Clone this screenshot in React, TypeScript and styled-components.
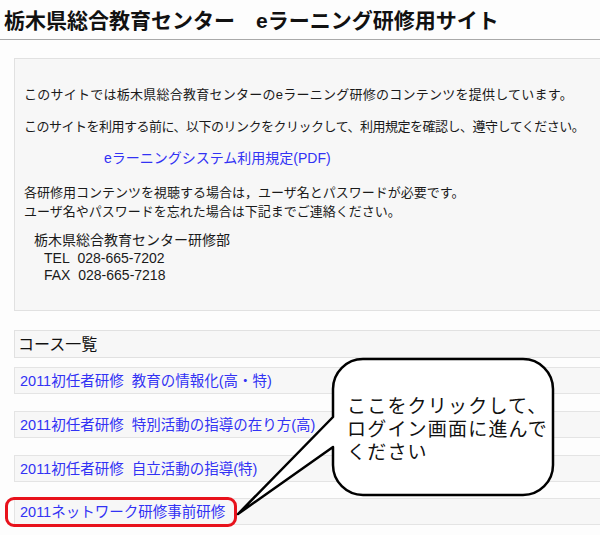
import React from 'react'
import styled, { createGlobalStyle } from 'styled-components'

const GlobalStyle = createGlobalStyle`
  html, body {
    margin: 0;
    padding: 0;
    background: #fdfdfd;
    overflow: hidden;
  }
  body {
    font-family: "Liberation Sans", "Noto Sans CJK JP", sans-serif;
    color: #1a1a1a;
  }
`

const courses = [
  '2011初任者研修\u00a0\u00a0教育の情報化(高・特)',
  '2011初任者研修\u00a0\u00a0特別活動の指導の在り方(高)',
  '2011初任者研修\u00a0\u00a0自立活動の指導(特)',
  '2011ネットワーク研修事前研修',
]

const App: React.FC = () => {
  return (
    <StyledPage>
      <GlobalStyle />
      <StyledHeader>栃木県総合教育センター{'\u3000'}eラーニング研修用サイト</StyledHeader>
      <StyledMain>
        <StyledInfoBox>
          <StyledText spacing={0.25}>このサイトでは栃木県総合教育センターのeラーニング研修のコンテンツを提供しています。</StyledText>
          <StyledText gap={13} spacing={-0.5}>このサイトを利用する前に、以下のリンクをクリックして、利用規定を確認し、遵守してください。</StyledText>
          <StyledPdfLink href="#">eラーニングシステム利用規定(PDF)</StyledPdfLink>
          <StyledText gap={15}>
            各研修用コンテンツを視聴する場合は，ユーザ名とパスワードが必要です。<br />
            ユーザ名やパスワードを忘れた場合は下記までご連絡ください。
          </StyledText>
          <StyledAddress>
            <div>栃木県総合教育センター研修部</div>
            <StyledPhone>TEL{'\u00a0\u00a0'}028-665-7202</StyledPhone>
            <StyledPhone>FAX{'\u00a0\u00a0'}028-665-7218</StyledPhone>
          </StyledAddress>
        </StyledInfoBox>

        <StyledCourseHead>コース一覧</StyledCourseHead>
        {courses.map((name, i) => (
          <StyledCourse key={i} gap={i === 0 ? 9 : i === 3 ? 16 : 17}>
            <StyledCourseLink href="#">{name}</StyledCourseLink>
          </StyledCourse>
        ))}
      </StyledMain>

      <StyledHighlight />
      <StyledBubble viewBox="0 0 600 535" width={600} height={535}>
        <path
          d="M363,359 H523 A30,30 0 0 1 553,389 V465 A30,30 0 0 1 523,495 H363 A30,30 0 0 1 333,465 V447 L238,514 L333,417 V389 A30,30 0 0 1 363,359 Z"
          fill="#fff"
          stroke="#000"
          strokeWidth={2.5}
          strokeLinejoin="round"
        />
      </StyledBubble>
      <StyledBubbleText>
        ここをクリックして、<br />
        ログイン画面に進んで<br />
        ください
      </StyledBubbleText>
    </StyledPage>
  )
}

const StyledPage = styled.div`
  position: relative;
  width: 600px;
  height: 535px;
  overflow: hidden;
`

const StyledHeader = styled.h1`
  margin: 0;
  padding: 3px 0 0 4px;
  height: 36px;
  line-height: 36px;
  font-size: 21px;
  font-weight: 700;
  color: #111;
  white-space: nowrap;
  border-bottom: 1px solid #a9a9a9;
`

const StyledMain = styled.div`
  width: 640px;
  padding: 18px 0 0 14px;
  display: flex;
  flex-direction: column;
`

const StyledInfoBox = styled.div`
  display: flex;
  flex-direction: column;
  align-items: flex-start;
  border: 1px solid #e1e1e1;
  background: #f7f7f7;
  padding: 26px 8px 25px 9px;
  font-size: 13px;
  line-height: 19px;
`

const StyledText = styled.p<{ gap?: number; spacing?: number }>`
  margin: ${(props) => props.gap || 0}px 0 0;
  letter-spacing: ${(props) => props.spacing || 0}px;
  white-space: nowrap;
`

const StyledPdfLink = styled.a`
  margin: 13px 0 0 80px;
  color: #3232f4;
  text-decoration: none;
  font-size: 14px;
`

const StyledAddress = styled.div`
  margin: 11px 0 0 10px;
  font-size: 14px;
  line-height: 17.5px;
`

const StyledPhone = styled.div`
  padding-left: 10px;
`

const StyledCourseHead = styled.div`
  margin-top: 19px;
  height: 26px;
  line-height: 27px;
  padding-left: 3px;
  border: 1px solid #e1e1e1;
  background: #f7f7f7;
  font-size: 16px;
  color: #111;
`

const StyledCourse = styled.div<{ gap: number }>`
  margin-top: ${(props) => props.gap}px;
  height: 25px;
  line-height: 26px;
  padding-left: 5px;
  border: 1px solid #e4e4e4;
  background: #f7f7f7;
`

const StyledCourseLink = styled.a`
  color: #3232f4;
  text-decoration: none;
  font-size: 14.5px;
  white-space: nowrap;
`

const StyledHighlight = styled.div`
  position: absolute;
  left: 5px;
  top: 497px;
  width: 226px;
  height: 24px;
  border: 3px solid #e8121c;
  border-radius: 9px;
`

const StyledBubble = styled.svg`
  position: absolute;
  left: 0;
  top: 0;
  pointer-events: none;
`

const StyledBubbleText = styled.div`
  position: absolute;
  left: 347px;
  top: 393px;
  font-family: "Noto Sans CJK JP", sans-serif;
  font-size: 19px;
  line-height: 23px;
  color: #111;
  letter-spacing: 1.2px;
  white-space: nowrap;
`

export default App
